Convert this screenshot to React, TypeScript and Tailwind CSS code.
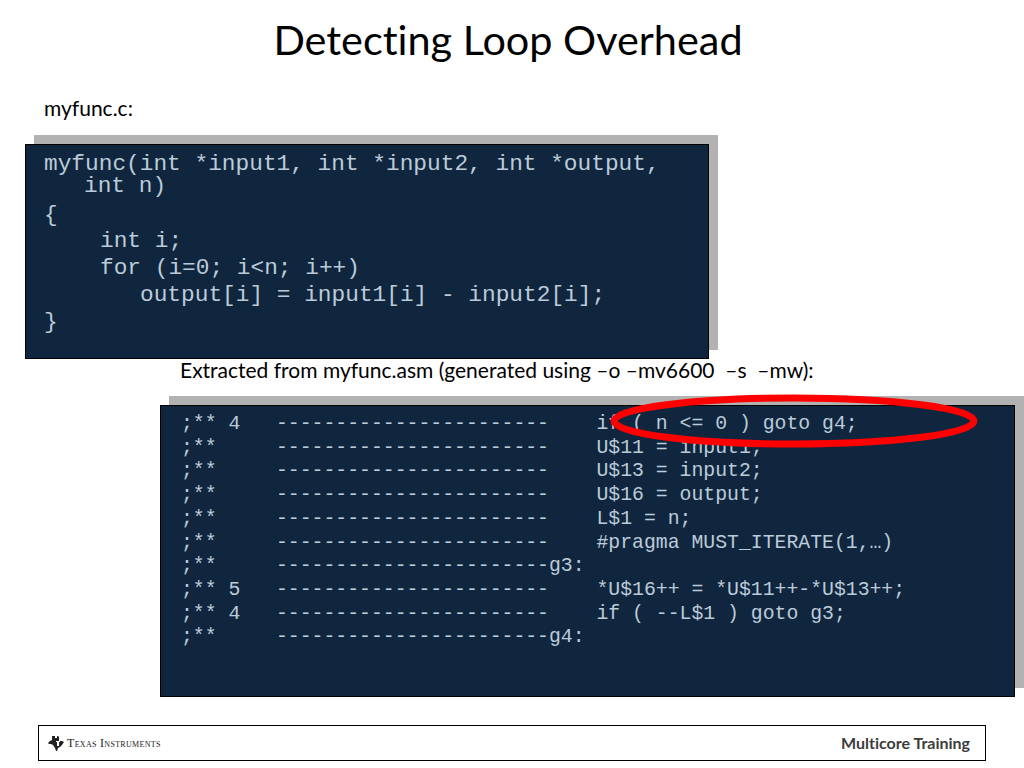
const asmLines = [
  ';** 4   -----------------------    if ( n <= 0 ) goto g4;',
  ';**     -----------------------    U$11 = input1;',
  ';**     -----------------------    U$13 = input2;',
  ';**     -----------------------    U$16 = output;',
  ';**     -----------------------    L$1 = n;',
  ';**     -----------------------    #pragma MUST_ITERATE(1,…)',
  ';**     -----------------------g3:',
  ';** 5   -----------------------    *U$16++ = *U$11++-*U$13++;',
  ';** 4   -----------------------    if ( --L$1 ) goto g3;',
  ';**     -----------------------g4:',
];

function TiLogo() {
  return (
    <svg width="16" height="15" viewBox="0 0 16 15" className="shrink-0">
      <path
        d="M4 0h3v2h2V0h1l1 1v4h3l2 1-2 3-2 2-2 1-1 3H8L7 12 5 9 3 8 1 8 0 7l2-2 2-1z"
        fill="#222222"
      />
      <path d="M8 5h4v1h-1v4H9V6H8z" fill="#ffffff" />
    </svg>
  );
}

export default function App() {
  return (
    <div className="relative flex h-[768px] w-[1024px] flex-col overflow-hidden bg-white font-['Lato',sans-serif] text-black [font-variant-ligatures:none]">
      <h1 className="mt-[13px] h-[52px] pr-2 text-center text-[41.4px] leading-[52px] font-normal">
        Detecting Loop Overhead
      </h1>

      <p className="mt-[31px] ml-[44px] h-[24px] text-[21px] leading-[24px]">myfunc.c:</p>

      <div className="mt-[24px] ml-[25px] h-[215px] w-[684px] border border-black bg-[#10263f] pt-[8px] pl-[18px] font-['Liberation_Mono',monospace] text-[22.8px] leading-[22px] text-[#bccbd9] shadow-[9px_-9px_0_#b2b2b2] whitespace-pre">
        <div>myfunc(int *input1, int *input2, int *output,</div>
        <div className="pl-[40px]">int n)</div>
        <div className="mt-[7px]">{'{'}</div>
        <div className="mt-[4px] pl-[56px]">int i;</div>
        <div className="mt-[5px] pl-[56px]">for (i=0; i&lt;n; i++)</div>
        <div className="mt-[5px] pl-[96px]">output[i] = input1[i] - input2[i];</div>
        <div className="mt-[5px]">{'}'}</div>
      </div>

      <p className="ml-[180px] h-[23px] text-[21px] leading-[21px] whitespace-pre">
        Extracted from myfunc.asm (generated using –o –mv6600  –s  –mw):
      </p>

      <div className="mt-[23px] ml-[160px] h-[292px] w-[855px] border border-black bg-[#10263f] pt-[7px] pl-[20px] font-['Liberation_Mono',monospace] text-[19.8px] leading-[23.7px] text-[#bccbd9] shadow-[9px_-9px_0_#b2b2b2] whitespace-pre">
        {asmLines.map((line, i) => (
          <div key={i}>{line}</div>
        ))}
      </div>

      <svg width="372" height="58" viewBox="0 0 372 58" className="absolute top-[392px] left-[608px]">
        <ellipse cx="186" cy="29" rx="180" ry="23" fill="none" stroke="#ff0000" strokeWidth="7" />
      </svg>

      <div className="mt-[28px] ml-[38px] flex h-[36px] w-[948px] items-center justify-between border border-black pr-[15px] pl-[9px]">
        <div className="flex items-center gap-[3px]">
          <TiLogo />
          <span className="font-['Liberation_Serif',serif] text-[12px] tracking-[0.3px] text-[#222222] [font-variant:small-caps]">
            Texas Instruments
          </span>
        </div>
        <span className="text-[16px] font-bold text-[#3c3c3c]">Multicore Training</span>
      </div>
    </div>
  );
}
